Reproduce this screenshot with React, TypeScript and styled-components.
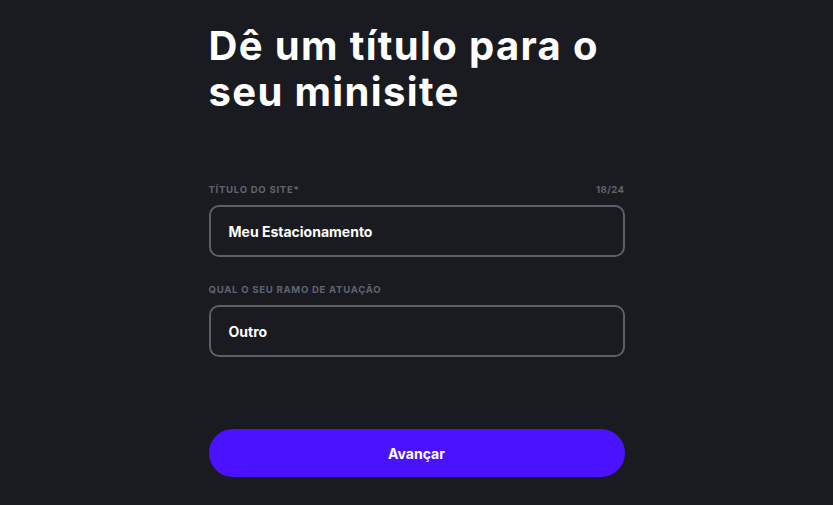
import styled, { createGlobalStyle } from "styled-components";

const GlobalStyle = createGlobalStyle`
  html, body {
    margin: 0;
    padding: 0;
    background: #1a1b20;
  }
  * { box-sizing: border-box; }
`;

const Page = styled.main`
  min-height: 505px;
  background: #1a1b20;
  display: flex;
  justify-content: center;
  font-family: Inter, "Liberation Sans", sans-serif;
`;

const Column = styled.div`
  width: 416px;
  padding-top: 23px;
  display: flex;
  flex-direction: column;
`;

const Title = styled.h1`
  margin: 0 0 69px;
  color: #ffffff;
  font-family: Inter, "Liberation Sans", sans-serif;
  font-size: 40px;
  font-weight: 700;
  line-height: 46px;
  letter-spacing: 1.35px;
`;

const Field = styled.div`
  display: flex;
  flex-direction: column;
  gap: 10px;
  margin-bottom: 27px;
`;

const LabelRow = styled.div`
  display: flex;
  justify-content: space-between;
  align-items: center;
`;

const Label = styled.label`
  color: #60636f;
  font-size: 9.6px;
  font-weight: 700;
  letter-spacing: 0.7px;
  text-transform: uppercase;
`;

const Counter = styled.span`
  color: #60636f;
  font-size: 9.6px;
  font-weight: 700;
  letter-spacing: 0.4px;
`;

const Input = styled.div`
  height: 52px;
  border: 2px solid #5c5e69;
  border-radius: 10px;
  display: flex;
  align-items: center;
  padding: 0 18px;
  color: #ffffff;
  font-size: 14px;
  font-weight: 700;
`;

const Button = styled.button`
  margin-top: 45px;
  height: 48px;
  border: none;
  border-radius: 24px;
  background: #4a12ff;
  color: #ffffff;
  font-family: Inter, "Liberation Sans", sans-serif;
  font-size: 14px;
  font-weight: 700;
  cursor: pointer;
`;

export default function App() {
  return (
    <>
      <GlobalStyle />
      <Page>
        <Column>
          <Title>
            Dê um título para o
            <br />
            seu minisite
          </Title>

          <Field>
            <LabelRow>
              <Label>Título do site*</Label>
              <Counter>18/24</Counter>
            </LabelRow>
            <Input>Meu Estacionamento</Input>
          </Field>

          <Field>
            <LabelRow>
              <Label>Qual o seu ramo de atuação</Label>
            </LabelRow>
            <Input>Outro</Input>
          </Field>

          <Button>Avançar</Button>
        </Column>
      </Page>
    </>
  );
}
